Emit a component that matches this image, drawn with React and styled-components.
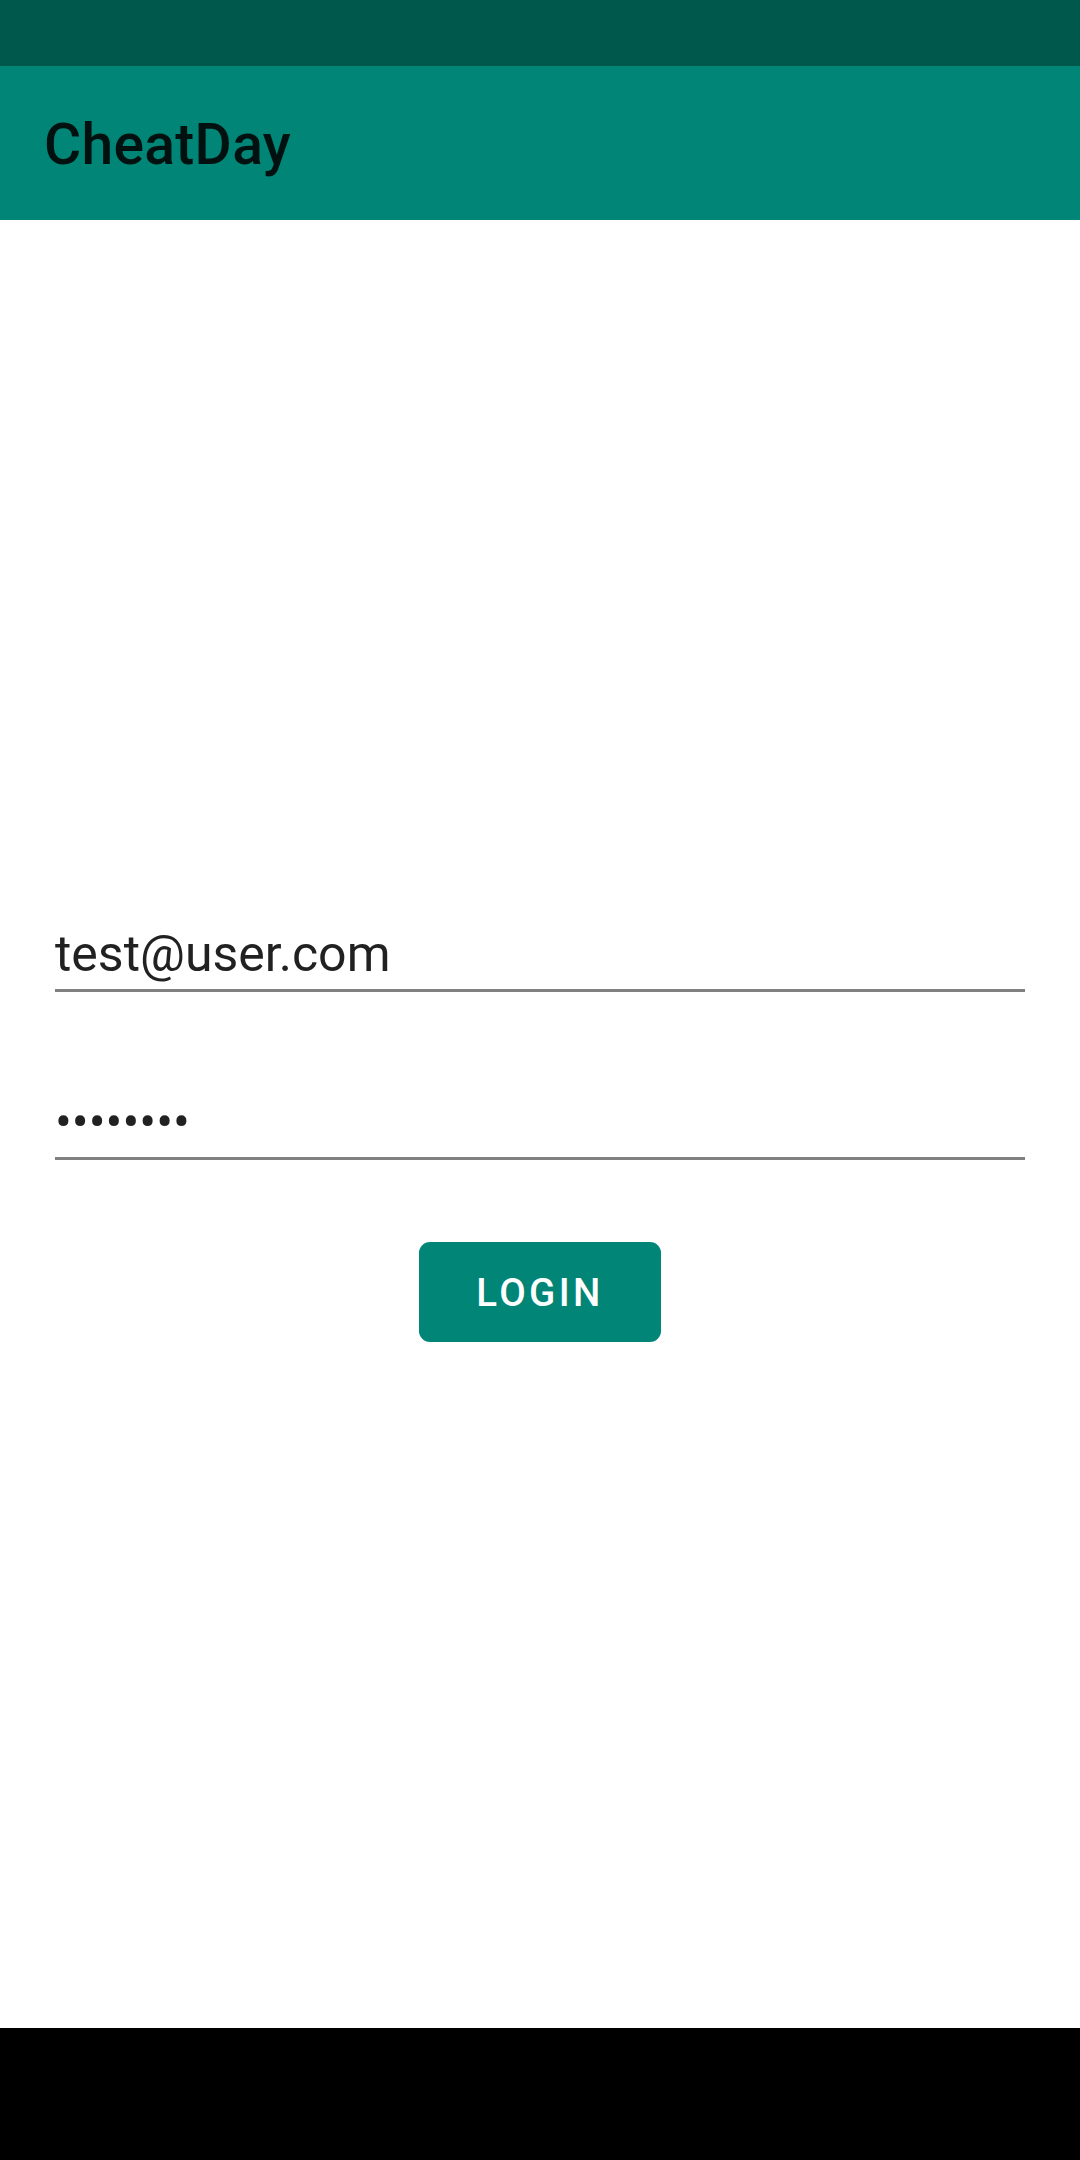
import styled, { createGlobalStyle } from 'styled-components';

const colors = {
   primary: '#008577',
   primaryDark: '#00574b',
   text: 'rgba(0, 0, 0, 0.87)',
   line: '#808080',
   white: '#ffffff',
   black: '#000000',
};

const GlobalStyle = createGlobalStyle`
   html, body {
      margin: 0;
      padding: 0;
      background: ${colors.white};
   }

   body {
      font-family: Roboto, 'Noto Sans', 'Liberation Sans', sans-serif;
   }
`;

const Screen = styled.div`
   display: flex;
   flex-direction: column;

   width: 1080px;
   height: 2160px;
   overflow: hidden;
`;

const StatusBar = styled.div`
   height: 66px;
   flex-shrink: 0;
   background-color: ${colors.primaryDark};
`;

const AppBar = styled.header`
   display: flex;
   align-items: center;

   height: 154px;
   flex-shrink: 0;
   padding-left: 44px;
   box-sizing: border-box;

   background-color: ${colors.primary};
`;

const Title = styled.h1`
   margin: 0;
   margin-top: 2px;

   font-size: 57px;
   font-weight: 500;
   letter-spacing: 0.3px;
   color: ${colors.text};
`;

const Main = styled.main`
   flex: 1;

   display: flex;
   flex-direction: column;
   align-items: stretch;

   padding: 706px 55px 0;
`;

const Field = styled.div`
   height: 57px;
   padding-bottom: 6px;

   border-bottom: 3px solid ${colors.line};

   font-size: 50px;
   line-height: 57px;
   color: ${colors.text};
   white-space: nowrap;

   & + & {
      margin-top: 102px;
   }
`;

const Dots = styled.span`
   letter-spacing: ${({ spacing }) => spacing}px;
`;

const ButtonRow = styled.div`
   display: flex;
   justify-content: center;

   margin-top: 82px;
`;

const LoginButton = styled.button`
   display: flex;
   align-items: center;
   justify-content: center;

   width: 242px;
   height: 100px;
   padding: 0;

   border: none;
   border-radius: 11px;
   background-color: ${colors.primary};

   font-family: Roboto, 'Liberation Sans', sans-serif;
   font-size: 38.5px;
   font-weight: 500;
   letter-spacing: 3.4px;
   text-transform: uppercase;
   color: ${colors.white};
`;

const NavBar = styled.div`
   height: 132px;
   flex-shrink: 0;
   background-color: ${colors.black};
`;

export default function App() {
   return (
      <>
         <GlobalStyle />
         <Screen>
            <StatusBar />
            <AppBar>
               <Title>CheatDay</Title>
            </AppBar>
            <Main>
               <Field>test@user.com</Field>
               <Field>
                  <Dots spacing={0}>••••••••</Dots>
               </Field>
               <ButtonRow>
                  <LoginButton>Login</LoginButton>
               </ButtonRow>
            </Main>
            <NavBar />
         </Screen>
      </>
   );
}
